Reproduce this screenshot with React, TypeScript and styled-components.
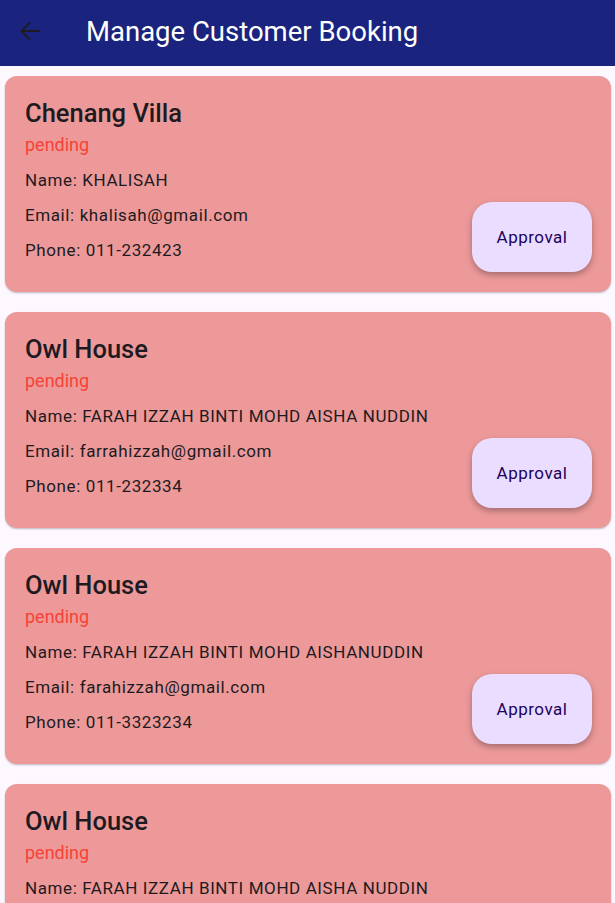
import React from 'react';
import styled, { createGlobalStyle } from 'styled-components';

const Global = createGlobalStyle`
  html, body {
    margin: 0;
    padding: 0;
    background: #fdf7ff;
    font-family: Roboto, "Noto Sans", sans-serif;
  }
`;

const S = {
    Page: styled.div`
    width: 615px;
    height: 903px;
    overflow: hidden;
    background: #fdf7ff;
    `,
    AppBar: styled.header`
    height: 66px;
    background: #1a237e;
    display: flex;
    align-items: center;
    padding: 0 0 4px 15px;
    box-sizing: border-box;
    `,
    Back: styled.div`
    width: 30px;
    height: 30px;
    display: flex;
    align-items: center;
    justify-content: center;
    margin-right: 41px;
    `,
    Title: styled.h1`
    margin: 0;
    color: #ffffff;
    font-size: 27.5px;
    font-weight: 400;
    letter-spacing: 0;
    `,
    List: styled.div`
    display: flex;
    flex-direction: column;
    gap: 20px;
    padding: 10px 4px 0 5px;
    `,
    Card: styled.div`
    background: #ed999a;
    border-radius: 12px;
    box-shadow: 0 1px 2px rgba(0, 0, 0, 0.25);
    padding: 21px 19px 20px 20px;
    display: flex;
    align-items: flex-end;
    justify-content: space-between;
    `,
    Info: styled.div`
    display: flex;
    flex-direction: column;
    padding-bottom: 4px;
    `,
    Name: styled.div`
    font-size: 25.5px;
    font-weight: 500;
    line-height: 32px;
    color: #1d1b20;
    `,
    Status: styled.div`
    font-size: 18px;
    line-height: 24px;
    color: #f44336;
    margin: 4px 0 6px;
    `,
    Line: styled.div`
    font-size: 17px;
    line-height: 35px;
    color: #1d1b20;
    letter-spacing: 0.6px;
    `,
    Approve: styled.button`
    width: 120px;
    height: 70px;
    border: none;
    border-radius: 20px;
    background: #eaddff;
    color: #21005d;
    font-family: Roboto, sans-serif;
    font-size: 17px;
    letter-spacing: 0.5px;
    box-shadow: 0 3px 6px rgba(0, 0, 0, 0.3);
    cursor: pointer;
    `
}

const bookings = [
    { place: 'Chenang Villa', name: 'KHALISAH', email: 'khalisah@gmail.com', phone: '011-232423' },
    { place: 'Owl House', name: 'FARAH IZZAH BINTI MOHD AISHA NUDDIN', email: 'farrahizzah@gmail.com', phone: '011-232334' },
    { place: 'Owl House', name: 'FARAH IZZAH BINTI MOHD AISHANUDDIN', email: 'farahizzah@gmail.com', phone: '011-3323234' },
    { place: 'Owl House', name: 'FARAH IZZAH BINTI MOHD AISHA NUDDIN', email: 'farrahizzah@gmail.com', phone: '011-232334' }
];

const App = () => {
    return <S.Page>
        <Global />
        <S.AppBar>
            <S.Back>
                <svg width="30" height="30" viewBox="0 0 24 24">
                    <path d="M20 11.25H6.9l5.6-5.6-1.05-1.05L4.05 12l7.4 7.4 1.05-1.05-5.6-5.6H20z" fill="#1d1b20" />
                </svg>
            </S.Back>
            <S.Title>Manage Customer Booking</S.Title>
        </S.AppBar>
        <S.List>
            {bookings.map((b, i) => <S.Card key={i}>
                <S.Info>
                    <S.Name>{b.place}</S.Name>
                    <S.Status>pending</S.Status>
                    <S.Line>Name: {b.name}</S.Line>
                    <S.Line>Email: {b.email}</S.Line>
                    <S.Line>Phone: {b.phone}</S.Line>
                </S.Info>
                <S.Approve>Approval</S.Approve>
            </S.Card>)}
        </S.List>
    </S.Page>
}

export default App;
